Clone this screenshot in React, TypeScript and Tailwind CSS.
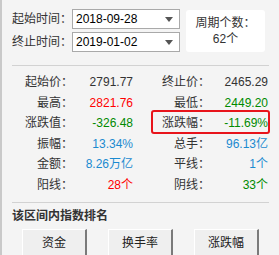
import React from "react"

interface Stat {
  label: string
  value: string
  color: string
}

// each row: left pair + right pair
const rows: [Stat, Stat][] = [
  [
    { label: "起始价：", value: "2791.77", color: "text-[#333333]" },
    { label: "终止价：", value: "2465.29", color: "text-[#333333]" },
  ],
  [
    { label: "最高：", value: "2821.76", color: "text-[#ff0000]" },
    { label: "最低：", value: "2449.20", color: "text-[#008a00]" },
  ],
  [
    { label: "涨跌值：", value: "-326.48", color: "text-[#008a00]" },
    { label: "涨跌幅：", value: "-11.69%", color: "text-[#008a00]" },
  ],
  [
    { label: "振幅：", value: "13.34%", color: "text-[#1b8ad0]" },
    { label: "总手：", value: "96.13亿", color: "text-[#1b8ad0]" },
  ],
  [
    { label: "金额：", value: "8.26万亿", color: "text-[#1b8ad0]" },
    { label: "平线：", value: "1个", color: "text-[#1b8ad0]" },
  ],
  [
    { label: "阳线：", value: "28个", color: "text-[#ff0000]" },
    { label: "阴线：", value: "33个", color: "text-[#008a00]" },
  ],
]

function DateSelect({ value }: { value: string }) {
  return (
    <div className="flex h-[20px] w-[108px] items-center justify-between border border-[#a9a9a9] bg-white pl-[3px] pr-[6px] text-black">
      <span className="leading-none">{value}</span>
      <span className="h-0 w-0 border-x-[4px] border-t-[5px] border-x-transparent border-t-[#555555]" />
    </div>
  )
}

function RankButton({ text }: { text: string }) {
  return (
    <button className="h-[26px] w-[65px] border-t border-l border-r-2 border-t-white border-l-white border-r-[#7a7a7a] bg-[#efefef] text-[12px] leading-none text-[#222222]">
      {text}
    </button>
  )
}

export default function App() {
  return (
    <div className="h-[255px] w-[279px] overflow-hidden border-l-2 border-[#c9c9c9] bg-[#f4f4f4] font-['Liberation_Sans','Noto_Sans_CJK_SC',sans-serif] text-[12px] text-[#333333]">
      {/* date range + period count */}
      <div className="flex pl-[10px] pt-[9px]">
        <div className="flex flex-col gap-[3px]">
          <div className="flex items-center">
            <span className="w-[60px] whitespace-nowrap leading-none">起始时间：</span>
            <DateSelect value="2018-09-28" />
          </div>
          <div className="flex items-center">
            <span className="w-[60px] whitespace-nowrap leading-none">终止时间：</span>
            <DateSelect value="2019-01-02" />
          </div>
        </div>
        <div className="ml-[6px] mt-[1px] flex h-[42px] w-[79px] flex-col items-center justify-center gap-[4px] rounded-[3px] bg-white leading-none">
          <span>周期个数：</span>
          <span>62个</span>
        </div>
      </div>

      <div className="mx-[10px] mt-[13px] h-px bg-[#d2d2d2]" />

      {/* stats */}
      <div className="mt-[6px] pl-[10px]">
        {rows.map((pair, i) => (
          <div key={i} className="relative flex h-[20.5px] items-center whitespace-nowrap leading-none">
            <span className="w-[61px] text-right">{pair[0].label}</span>
            <span className={`w-[60px] text-right ${pair[0].color}`}>{pair[0].value}</span>
            <span className="w-[77px] text-right">{pair[1].label}</span>
            <span className={`w-[58px] text-right ${pair[1].color}`}>{pair[1].value}</span>
            {i === 2 && (
              <div className="absolute left-[139px] top-[-3px] h-[24px] w-[119px] rounded-[3px] border-2 border-[#e8141b]" />
            )}
          </div>
        ))}
      </div>

      <div className="mx-[10px] mt-[7px] h-px bg-[#d2d2d2]" />

      <div className="mt-[7px] pl-[10px] font-semibold leading-none text-[#333333]">该区间内指数排名</div>

      <div className="ml-[20px] mt-[7px] flex gap-[21px]">
        <RankButton text="资金" />
        <RankButton text="换手率" />
        <RankButton text="涨跌幅" />
      </div>
    </div>
  )
}
